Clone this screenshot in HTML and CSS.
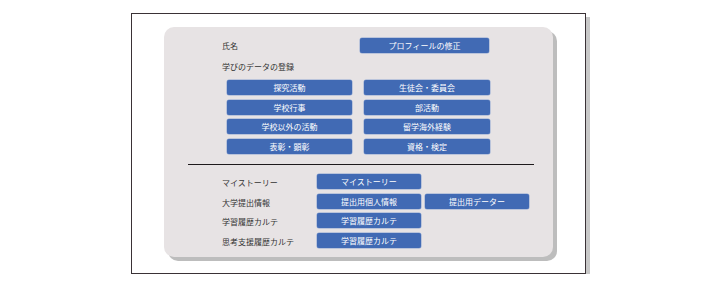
FILE: index.html
```html
<!DOCTYPE html>
<html lang="ja">
<head>
    <meta charset="UTF-8">
    <title>マイページ</title>
    <link rel="stylesheet" href="styles.css">
</head>
<body>
    <div class="frame">
        <div class="panel">
            <div class="name-row">
                <span class="label name-label">氏名</span>
                <a class="btn btn-profile">プロフィールの修正</a>
            </div>

            <div class="section-title">学びのデータの登録</div>
            <div class="data-grid">
                <a class="btn">探究活動</a>
                <a class="btn">生徒会・委員会</a>
                <a class="btn">学校行事</a>
                <a class="btn">部活動</a>
                <a class="btn">学校以外の活動</a>
                <a class="btn">留学海外経験</a>
                <a class="btn">表彰・顕彰</a>
                <a class="btn">資格・検定</a>
            </div>

            <hr class="rule">

            <div class="link-grid">
                <span class="label">マイストーリー</span>
                <a class="btn">マイストーリー</a>
                <span></span>

                <span class="label">大学提出情報</span>
                <a class="btn">提出用個人情報</a>
                <a class="btn">提出用データー</a>

                <span class="label">学習履歴カルテ</span>
                <a class="btn">学習履歴カルテ</a>
                <span></span>

                <span class="label">思考支援履歴カルテ</span>
                <a class="btn">学習履歴カルテ</a>
                <span></span>
            </div>
        </div>
    </div>
</body>
</html>
```

FILE: styles.css
```css
body {
    margin: 0;
    background: #ffffff;
    font-family: "Noto Sans CJK JP", "Noto Sans", sans-serif;
    font-size: 8px;
    color: #333333;
}
.frame {
    box-sizing: border-box;
    margin: 13px 0 0 131px;
    width: 455px;
    height: 261px;
    padding: 13px 0 0 32px;
    border: 1px solid #3a3236;
    background: #ffffff;
    box-shadow: 4px 4px 0 #c8c8c8;
}
.panel {
    box-sizing: border-box;
    width: 389px;
    height: 230px;
    padding-top: 11px;
    background: #e7e3e4;
    border-radius: 10px;
    box-shadow: 4px 4px 0 #bdbdbd;
}
.label {
    line-height: 13px;
    padding-top: 2px;
    white-space: nowrap;
}
.btn {
    display: block;
    height: 15px;
    line-height: 15px;
    text-align: center;
    color: #ffffff;
    background: #416ab4;
    border-radius: 2px;
    box-shadow: 0 0 0 0.5px #8ea6d2;
    white-space: nowrap;
}
.name-row {
    display: flex;
    margin-left: 58px;
}
.name-label {
    width: 138px;
    line-height: 15px;
    padding-top: 0;
}
.btn-profile {
    width: 129px;
}
.section-title {
    margin: 6px 0 0 58px;
    line-height: 15px;
}
.data-grid {
    display: grid;
    grid-template-columns: 125px 126px;
    column-gap: 12px;
    row-gap: 4.5px;
    margin: 6px 0 0 63px;
}
.rule {
    margin: 10.5px 0 0 24px;
    width: 346px;
    height: 0;
    border: none;
    border-top: 1.3px solid #1e1a1c;
}
.link-grid {
    display: grid;
    grid-template-columns: 91px 104px 104px;
    column-gap: 4px;
    row-gap: 4.5px;
    margin: 9px 0 0 58px;
}
```
